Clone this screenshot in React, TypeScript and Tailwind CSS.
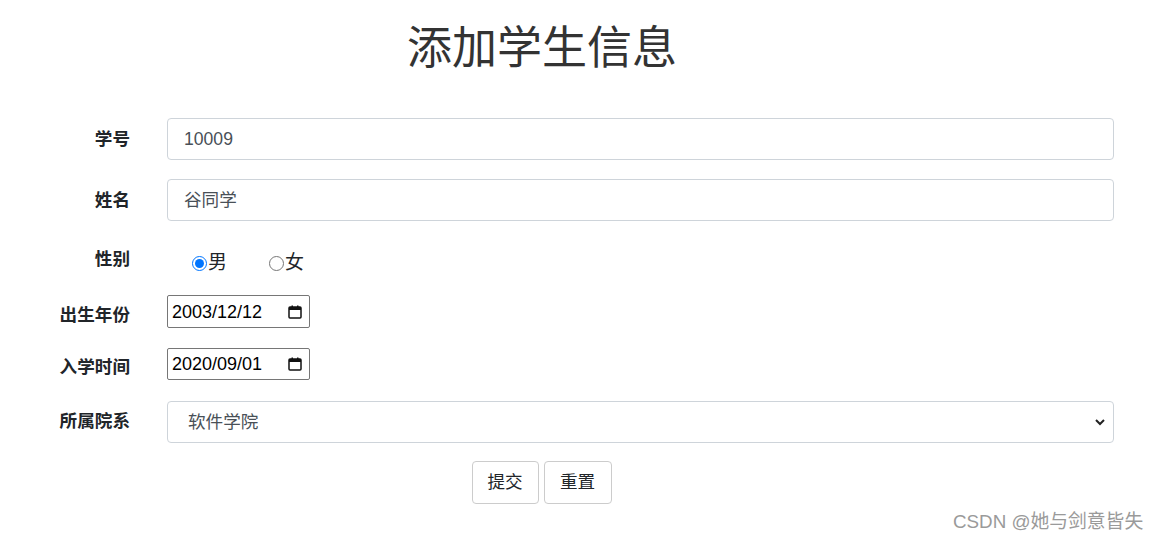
import React from 'react';

const font = { fontFamily: '"Liberation Sans", "Noto Sans CJK SC", sans-serif' };

function CalendarIcon() {
  return (
    <svg width="14" height="14" viewBox="0 0 14 14" className="shrink-0">
      <rect x="1" y="2" width="12" height="11" rx="1" fill="none" stroke="#111" strokeWidth="1.5" />
      <rect x="1" y="2" width="12" height="3" fill="#111" />
      <rect x="3.5" y="0.5" width="1.5" height="2.5" fill="#111" />
      <rect x="9" y="0.5" width="1.5" height="2.5" fill="#111" />
    </svg>
  );
}

function Label({ text, className = '' }: { text: string; className?: string }) {
  return (
    <div className={`w-[130px] shrink-0 text-right font-bold text-[17.6px] leading-[24px] text-[#212529] ${className}`}>
      {text}
    </div>
  );
}

function DateBox({ value }: { value: string }) {
  return (
    <div className="ml-[37px] w-[143px] h-full flex items-center justify-between border border-[#767676] rounded-[2px] pl-[4px] pr-[7px] bg-white">
      <span className="text-[18px] leading-[20px] text-black">{value}</span>
      <CalendarIcon />
    </div>
  );
}

export default function App() {
  return (
    <div className="relative w-[1159px] h-[541px] bg-white overflow-hidden" style={font}>
      <h1 className="w-[1084px] text-center mt-[26px] text-[45px] leading-[45px] font-normal text-[#333]">
        添加学生信息
      </h1>

      <form className="flex flex-col mt-[47px]">
        <div className="flex items-center h-[42px]">
          <Label text="学号" />
          <div className="ml-[37px] w-[947px] h-full flex items-center border border-[#ced4da] rounded-[4px] pl-[16px] text-[17.6px] text-[#495057]">
            10009
          </div>
        </div>

        <div className="flex items-center h-[42px] mt-[19px]">
          <Label text="姓名" />
          <div className="ml-[37px] w-[947px] h-full flex items-center border border-[#ced4da] rounded-[4px] pl-[16px] text-[17.6px] text-[#495057]">
            谷同学
          </div>
        </div>

        <div className="flex items-center h-[42px] mt-[19px]">
          <Label text="性别" className="pb-[4px]" />
          <div className="ml-[37px] flex items-center text-[19px] text-[#212529] pt-[4px]">
            <label className="flex items-center ml-[25px]">
              <input type="radio" name="sex" defaultChecked className="w-[15px] h-[15px] m-0" />
              <span className="ml-[1px]">男</span>
            </label>
            <label className="flex items-center ml-[42px]">
              <input type="radio" name="sex" className="w-[15px] h-[15px] m-0" />
              <span className="ml-[1px]">女</span>
            </label>
          </div>
        </div>

        <div className="flex items-center h-[33px] mt-[13px]">
          <Label text="出生年份" className="pt-[7px]" />
          <DateBox value="2003/12/12" />
        </div>

        <div className="flex items-center h-[32px] mt-[20px]">
          <Label text="入学时间" className="pt-[6px]" />
          <DateBox value="2020/09/01" />
        </div>

        <div className="flex items-center h-[42px] mt-[21px]">
          <Label text="所属院系" className="pb-[3px]" />
          <div className="ml-[37px] w-[947px] h-full flex items-center justify-between border border-[#ced4da] rounded-[4px] pl-[20px] pr-[7px] text-[17.6px] text-[#495057]">
            <span>软件学院</span>
            <svg width="12" height="12" viewBox="0 0 12 12">
              <path d="M2 4 L6 8 L10 4" fill="none" stroke="#222" strokeWidth="2" />
            </svg>
          </div>
        </div>

        <div className="flex justify-center gap-[5px] mt-[18px] w-[1083px]">
          <button type="button" className="w-[67px] h-[43px] border border-[#cccccc] rounded-[4px] bg-white text-[17.6px] text-[#212529]">
            提交
          </button>
          <button type="button" className="w-[68px] h-[43px] border border-[#cccccc] rounded-[4px] bg-white text-[17.6px] text-[#212529]">
            重置
          </button>
        </div>
      </form>

      <div className="absolute left-[953px] top-[510px] text-[18.8px] leading-[24px] text-[#9a9a9a] whitespace-nowrap">
        CSDN @她与剑意皆失
      </div>
    </div>
  );
}
